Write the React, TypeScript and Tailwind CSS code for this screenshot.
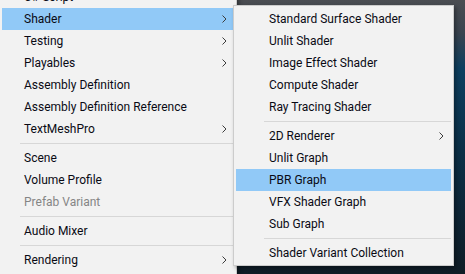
import React from 'react';

type Item =
  | { kind: 'item'; label: string; sub?: boolean; active?: boolean; disabled?: boolean }
  | { kind: 'sep' };

const mainItems: Item[] = [
  { kind: 'item', label: 'C# Script' },
  { kind: 'item', label: 'Shader', sub: true, active: true },
  { kind: 'item', label: 'Testing', sub: true },
  { kind: 'item', label: 'Playables', sub: true },
  { kind: 'item', label: 'Assembly Definition' },
  { kind: 'item', label: 'Assembly Definition Reference' },
  { kind: 'item', label: 'TextMeshPro', sub: true },
  { kind: 'sep' },
  { kind: 'item', label: 'Scene' },
  { kind: 'item', label: 'Volume Profile' },
  { kind: 'item', label: 'Prefab Variant', disabled: true },
  { kind: 'sep' },
  { kind: 'item', label: 'Audio Mixer' },
  { kind: 'sep' },
  { kind: 'item', label: 'Rendering', sub: true },
];

const shaderItems: Item[] = [
  { kind: 'item', label: 'Standard Surface Shader' },
  { kind: 'item', label: 'Unlit Shader' },
  { kind: 'item', label: 'Image Effect Shader' },
  { kind: 'item', label: 'Compute Shader' },
  { kind: 'item', label: 'Ray Tracing Shader' },
  { kind: 'sep' },
  { kind: 'item', label: '2D Renderer', sub: true },
  { kind: 'item', label: 'Unlit Graph' },
  { kind: 'item', label: 'PBR Graph', active: true },
  { kind: 'item', label: 'VFX Shader Graph' },
  { kind: 'item', label: 'Sub Graph' },
  { kind: 'sep' },
  { kind: 'item', label: 'Shader Variant Collection' },
];

const Chevron = () => (
  <svg width="5" height="8" viewBox="0 0 5 8" className="shrink-0">
    <polyline points="0.5,0.5 4,4 0.5,7.5" fill="none" stroke="#3c3c3c" strokeWidth="1" />
  </svg>
);

const MenuList: React.FC<{ items: Item[]; textPad: string; sepPad: string }> = ({ items, textPad, sepPad }) => (
  <>
    {items.map((it, i) =>
      it.kind === 'sep' ? (
        <div key={i} className={`h-[7px] flex items-center ${sepPad} pr-[2px]`}>
          <div className="h-px w-full bg-[#d7d7d7]" />
        </div>
      ) : (
        <div
          key={i}
          className={`h-[22px] mx-[2px] flex items-center justify-between ${textPad} pr-[7px] ${
            it.active ? 'bg-[#91c9f7]' : ''
          } ${it.disabled ? 'text-[#858585]' : 'text-[#0a0a14]'}`}
        >
          <span className="whitespace-nowrap">{it.label}</span>
          {it.sub && <Chevron />}
        </div>
      )
    )}
  </>
);

export default function App() {
  return (
    <div
      className="relative w-[465px] h-[274px] overflow-hidden bg-[linear-gradient(180deg,#4b4d52_0%,#3a4450_12%,#0d3f60_25%,#0b2f47_55%,#0f1c26_100%)] text-[12px] leading-none"
      style={{ fontFamily: 'Roboto, "Noto Sans", "DejaVu Sans", sans-serif' }}
    >
      {/* main context menu */}
      <div className="absolute left-0 top-[-14px] w-[237px] h-[300px] bg-[#f2f2f2] border-r border-[#cccccc] shadow-[2px_2px_4px_rgba(0,0,0,0.35)]">
        <MenuList items={mainItems} textPad="pl-[22px]" sepPad="pl-[20px]" />
      </div>

      {/* shader submenu */}
      <div className="absolute left-[233px] top-[5px] w-[221px] bg-[#f2f2f2] border border-[#cccccc] pt-[2px] pb-px shadow-[2px_2px_4px_rgba(0,0,0,0.35)]">
        <MenuList items={shaderItems} textPad="pl-[33px]" sepPad="pl-[30px]" />
      </div>
    </div>
  );
}
